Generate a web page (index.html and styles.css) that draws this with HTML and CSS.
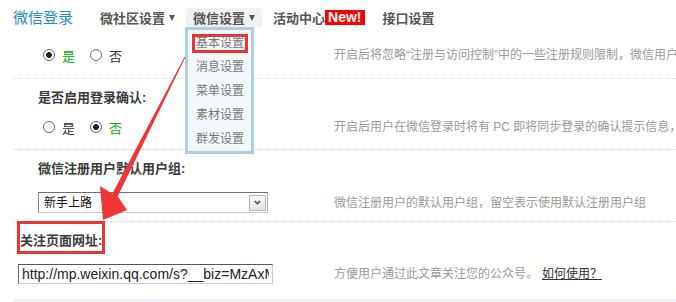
FILE: index.html
```html
<!DOCTYPE html>
<html>
<head>
    <title>微信登录 - 基本设置</title>
    <meta charset="UTF-8">
    <link rel="stylesheet" href="styles.css">
</head>
<body>
<div class="page">
    <div class="topbar">
        <span class="brand">微信登录</span>
        <ul class="nav">
            <li class="nav-item">微社区设置<i class="caret"></i></li>
            <li class="nav-item active">微信设置<i class="caret"></i>
                <ul class="submenu">
                    <li><span class="mark">基本设置</span></li>
                    <li>消息设置</li>
                    <li>菜单设置</li>
                    <li>素材设置</li>
                    <li>群发设置</li>
                </ul>
            </li>
            <li class="nav-item">活动中心<span class="badge-new">New!</span></li>
            <li class="nav-item">接口设置</li>
        </ul>
    </div>

    <div class="form">
        <div class="row row-first">
            <div class="field">
                <div class="choices">
                    <label class="choice on"><input type="radio" name="allowregister" checked>是</label>
                    <label class="choice"><input type="radio" name="allowregister">否</label>
                </div>
                <div class="tip">开启后将忽略“注册与访问控制”中的一些注册规则限制，微信用户</div>
            </div>
        </div>

        <div class="row">
            <div class="row-label">是否启用登录确认:</div>
            <div class="field">
                <div class="choices">
                    <label class="choice"><input type="radio" name="confirmlogin">是</label>
                    <label class="choice on"><input type="radio" name="confirmlogin" checked>否</label>
                </div>
                <div class="tip">开启后用户在微信登录时将有 PC 即将同步登录的确认提示信息，</div>
            </div>
        </div>

        <div class="row row-input">
            <div class="row-label">微信注册用户默认用户组:</div>
            <div class="field">
                <div class="select-box">
                    <select name="newusergroupid">
                        <option>新手上路</option>
                        <option>注册会员</option>
                        <option>中级会员</option>
                    </select>
                    <span class="select-btn">
                        <svg width="7" height="5" viewBox="0 0 7 5"><path d="M0.8 1 L3.5 3.8 L6.2 1" fill="none" stroke="#444" stroke-width="1.4"/></svg>
                    </span>
                </div>
                <div class="tip">微信注册用户的默认用户组，留空表示使用默认注册用户组</div>
            </div>
        </div>

        <div class="row row-input row-flush">
            <div class="row-label marked">关注页面网址:</div>
            <div class="field">
                <input class="url-input" type="text" name="followurl" value="http://mp.weixin.qq.com/s?__biz=MzAxMjY4NTQ0MA==&amp;mid=200000001">
                <div class="tip">方便用户通过此文章关注您的公众号。<a href="#">如何使用？</a></div>
            </div>
        </div>

        <div class="form-foot"></div>
    </div>

    <!-- annotation arrow from the menu to the highlighted field -->
    <svg class="arrow" width="676" height="302" viewBox="0 0 676 302">
        <polygon points="185.4,57.2 117.7,196.3 127,210 103,220 100,186 112.3,193.7 184.6,56.8" fill="#ef3535"/>
    </svg>
</div>
</body>
</html>
```

FILE: styles.css
```css
body { margin: 0; font-family: "Liberation Sans", "Noto Sans CJK SC", sans-serif; font-size: 12px; color: #333; background: #fff; }
.page { position: relative; width: 676px; height: 302px; overflow: hidden; }

/* top bar */
.topbar { display: flex; align-items: flex-start; height: 36px; padding: 8px 0 0 13px; box-sizing: border-box; }
.brand { font-size: 15px; line-height: 19px; color: #1a8ccc; margin-right: 20px; }
.nav { display: flex; gap: 4px; list-style: none; margin: 0; padding: 0; }
.nav-item { position: relative; display: flex; align-items: center; height: 19px; padding: 0 7px; font-size: 13px; font-weight: bold; color: #555; }
.nav-item.active { background: #f1f1f1; border-radius: 4px 4px 0 0; }
.caret { width: 0; height: 0; margin-left: 4px; border-left: 3px solid transparent; border-right: 3px solid transparent; border-top: 6px solid #555; }
.badge-new { background: #f00; color: #fff; font-size: 14px; line-height: 15px; padding: 0 3px; }

.submenu { position: absolute; top: 19px; left: -1px; width: 63px; margin: 0; padding: 1px 0 0; list-style: none; background: #f3f8fc; border: 3px solid #aecfdd; font-size: 12px; font-weight: normal; color: #777; z-index: 2; }
.submenu li { height: 24px; line-height: 24px; padding-left: 8px; }
.submenu .mark { display: inline-block; vertical-align: top; margin: 3px 0 0 -4px; padding: 0 1px; border: 3px solid #ee3333; line-height: 13px; }

/* form rows */
.form { margin-left: 13px; }
.row { padding: 9px 0 10px 25px; border-bottom: 1px dotted #cfdde8; }
.row-first { padding-top: 0; padding-bottom: 11px; }
.row-input { padding-bottom: 8px; }
.row-flush { padding-left: 5px; padding-bottom: 15px; border-bottom: 0; }
.row-label { font-size: 13px; font-weight: bold; line-height: 20px; color: #3a3a3a; }
.row-label.marked { width: fit-content; margin: -10px 0 -3px -1px; padding-top: 7px; border: 3px solid #ee3333; }

.field { display: grid; grid-template-columns: 296px 1fr; align-items: center; padding-top: 7px; }
.row-input .field { padding-top: 13px; }
.row-flush .field { grid-template-columns: 316px 1fr; }

.choices { display: flex; align-items: center; height: 24px; }
.choice { display: flex; align-items: center; margin-right: 10px; font-size: 13px; color: #333; }
.choice.on { color: #00b400; }
.choice input { appearance: none; width: 12px; height: 12px; margin: 0 7px 0 5px; border: 1px solid #666; border-radius: 50%; background: #fff; box-sizing: border-box; }
.choice input:checked { background: radial-gradient(circle, #222 0 2.6px, #fff 3.2px); }

.tip { min-width: 0; overflow: hidden; white-space: nowrap; line-height: 20px; color: #999; }
.tip a { margin-left: 4px; color: #333; text-decoration: underline; }

.select-box { display: flex; align-items: center; width: 230px; height: 21px; box-sizing: border-box; border: 1px solid; border-color: #707070 #b0b0b0 #c8c8c8 #8a8a8a; background: #fff; }
.select-box select { flex: 1; min-width: 0; appearance: none; border: 0; background: transparent; padding: 0 0 0 5px; font: 12px "Liberation Sans", "Noto Sans CJK SC", sans-serif; color: #111; outline: none; }
.select-btn { display: flex; align-items: center; justify-content: center; width: 17px; height: 16px; margin-right: 1px; box-sizing: border-box; border: 1px solid #b5b5b5; background: linear-gradient(#fafafa, #e2e2e2); }

.url-input { width: 255px; height: 20px; box-sizing: border-box; margin: 0; padding: 0 3px; border: 1px solid; border-color: #555 #ccc #ccc #666; font: 14px "Liberation Sans", sans-serif; color: #222; }

.form-foot { height: 10px; background: #eef4f9; }

.arrow { position: absolute; left: 0; top: 0; pointer-events: none; z-index: 3; }
```
